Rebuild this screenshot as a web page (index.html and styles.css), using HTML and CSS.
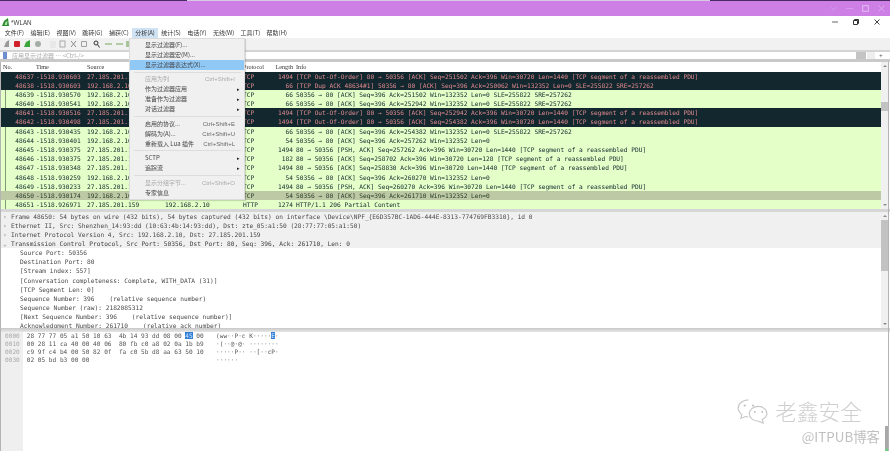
FILE: index.html
```html
<!DOCTYPE html>
<html lang="zh">
<head>
<meta charset="utf-8">
<title>*WLAN</title>
<link rel="stylesheet" href="styles.css">
</head>
<body>
<div class="screen">
  <div class="topstrip"><span class="seg seg1"></span><span class="seg seg2"></span><span class="seg seg3"></span></div>
  <div class="hostbar">
    <svg class="hostctl" viewBox="0 0 10 10"><path d="M1 3l4 4 4-4" fill="none" stroke="#dca8ef"/></svg>
    <svg class="hostctl" viewBox="0 0 10 10"><path d="M0 5h10" stroke="#dca8ef"/></svg>
    <svg class="hostctl" viewBox="0 0 10 10"><rect x="1" y="1" width="8" height="8" fill="none" stroke="#e4bdf3" stroke-width="1.4"/></svg>
    <svg class="hostctl" viewBox="0 0 10 10"><path d="M1 1l8 8M9 1l-8 8" stroke="#e4bdf3"/></svg>
  </div>
  <div class="window">
    <div class="titlebar">
      <svg class="finicon" width="7" height="8" viewBox="0 0 7 8"><path d="M0 8 L2 3 L6 0 L7 8 Z" fill="#2c8a2c"/><path d="M2.5 7 L3.5 4 L5.5 3 L5 7 Z" fill="#a9e0a9"/></svg>
      <span class="title">*WLAN</span>
      <span class="winctl">
        <svg width="6" height="6" viewBox="0 0 6 6"><path d="M0 3H6" stroke="#666"/></svg>
        <svg width="6" height="6" viewBox="0 0 6 6"><path d="M.5 1.5h4v4h-4zM1.5 1.5v-1h4v4h-1" fill="none" stroke="#333"/></svg>
        <svg width="6" height="6" viewBox="0 0 6 6"><path d="M.5 .5l5 5M5.5 .5l-5 5" stroke="#444"/></svg>
      </span>
    </div>
    <div class="menubar">
      <span>文件(F)</span><span>编辑(E)</span><span>视图(V)</span><span>跳转(G)</span><span>捕获(C)</span><span class="open">分析(A)</span><span>统计(S)</span><span>电话(Y)</span><span>无线(W)</span><span>工具(T)</span><span>帮助(H)</span>
    </div>
    <div class="toolbar">
      <svg class="tb" width="135" height="11" viewBox="0 0 135 11">
        <path d="M4 9 L6 4 L9 2 L9 9Z" fill="#9a9a9a"/>
        <rect x="14" y="3" width="6" height="6" rx="1" fill="#d0202a"/>
        <path d="M24 9 L26 4 L30 2 L30 9Z" fill="#3aa53a"/>
        <circle cx="38" cy="6" r="3" fill="#a4aea6"/>
        <rect x="50" y="3" width="6" height="7" fill="#e8e8e8"/>
        <rect x="60" y="3" width="5" height="6" fill="none" stroke="#aaa"/>
        <path d="M71 3l5 6M76 3l-5 6" stroke="#8a8a8a"/>
        <path d="M81.5 3.5h5v5h-5z" fill="none" stroke="#a0a0a0"/>
        <circle cx="96" cy="5" r="2" fill="none" stroke="#333"/><path d="M97.5 6.5l2 3" stroke="#333"/>
        <path d="M105 6h7" stroke="#b4cca6" stroke-width="2"/>
        <path d="M116 6h7" stroke="#b4cca6" stroke-width="2"/>
        <path d="M126 3h3v6h-3z" fill="#a9c49a"/>
      </svg>
    </div>
    <div class="filterbar">
      <span class="fbox"><i class="bm"></i><span class="fhint">应用显示过滤器 … &lt;Ctrl-/&gt;</span></span>
      <span class="fbtn"></span><span class="fdrop"></span><span class="fplus">+</span>
    </div>
    <div class="plist">
      <div class="rows">
        <div class="row head"><span>No.</span><span>Time</span><span>Source</span><span>Destination</span><span>Protocol</span><span class="r">Length</span><span>Info</span></div>
        <div class="row dark"><span class="r">48637</span><span>-1518.930603</span><span>27.185.201.159</span><span>192.168.2.10</span><span>TCP</span><span class="r">1494</span><span>[TCP Out-Of-Order] 80 → 50356 [ACK] Seq=251502 Ack=396 Win=30720 Len=1440 [TCP segment of a reassembled PDU]</span></div>
        <div class="row dark"><span class="r">48638</span><span>-1518.930603</span><span>192.168.2.10</span><span>27.185.201.159</span><span>TCP</span><span class="r">66</span><span>[TCP Dup ACK 48634#1] 50356 → 80 [ACK] Seq=396 Ack=250062 Win=132352 Len=0 SLE=255822 SRE=257262</span></div>
        <div class="row"><span class="r">48639</span><span>-1518.930570</span><span>192.168.2.10</span><span>27.185.201.159</span><span>TCP</span><span class="r">66</span><span>50356 → 80 [ACK] Seq=396 Ack=251502 Win=132352 Len=0 SLE=255822 SRE=257262</span></div>
        <div class="row"><span class="r">48640</span><span>-1518.930541</span><span>192.168.2.10</span><span>27.185.201.159</span><span>TCP</span><span class="r">66</span><span>50356 → 80 [ACK] Seq=396 Ack=252942 Win=132352 Len=0 SLE=255822 SRE=257262</span></div>
        <div class="row dark"><span class="r">48641</span><span>-1518.930516</span><span>27.185.201.159</span><span>192.168.2.10</span><span>TCP</span><span class="r">1494</span><span>[TCP Out-Of-Order] 80 → 50356 [ACK] Seq=252942 Ack=396 Win=30720 Len=1440 [TCP segment of a reassembled PDU]</span></div>
        <div class="row dark"><span class="r">48642</span><span>-1518.930498</span><span>27.185.201.159</span><span>192.168.2.10</span><span>TCP</span><span class="r">1494</span><span>[TCP Out-Of-Order] 80 → 50356 [ACK] Seq=254382 Ack=396 Win=30720 Len=1440 [TCP segment of a reassembled PDU]</span></div>
        <div class="row"><span class="r">48643</span><span>-1518.930435</span><span>192.168.2.10</span><span>27.185.201.159</span><span>TCP</span><span class="r">66</span><span>50356 → 80 [ACK] Seq=396 Ack=254382 Win=132352 Len=0 SLE=255822 SRE=257262</span></div>
        <div class="row"><span class="r">48644</span><span>-1518.930401</span><span>192.168.2.10</span><span>27.185.201.159</span><span>TCP</span><span class="r">54</span><span>50356 → 80 [ACK] Seq=396 Ack=257262 Win=132352 Len=0</span></div>
        <div class="row"><span class="r">48645</span><span>-1518.930375</span><span>27.185.201.159</span><span>192.168.2.10</span><span>TCP</span><span class="r">1494</span><span>80 → 50356 [PSH, ACK] Seq=257262 Ack=396 Win=30720 Len=1440 [TCP segment of a reassembled PDU]</span></div>
        <div class="row"><span class="r">48646</span><span>-1518.930375</span><span>27.185.201.159</span><span>192.168.2.10</span><span>TCP</span><span class="r">182</span><span>80 → 50356 [ACK] Seq=258702 Ack=396 Win=30720 Len=128 [TCP segment of a reassembled PDU]</span></div>
        <div class="row"><span class="r">48647</span><span>-1518.930348</span><span>27.185.201.159</span><span>192.168.2.10</span><span>TCP</span><span class="r">1494</span><span>80 → 50356 [ACK] Seq=258830 Ack=396 Win=30720 Len=1440 [TCP segment of a reassembled PDU]</span></div>
        <div class="row"><span class="r">48648</span><span>-1518.930259</span><span>192.168.2.10</span><span>27.185.201.159</span><span>TCP</span><span class="r">54</span><span>50356 → 80 [ACK] Seq=396 Ack=260270 Win=132352 Len=0</span></div>
        <div class="row"><span class="r">48649</span><span>-1518.930233</span><span>27.185.201.159</span><span>192.168.2.10</span><span>TCP</span><span class="r">1494</span><span>80 → 50356 [PSH, ACK] Seq=260270 Ack=396 Win=30720 Len=1440 [TCP segment of a reassembled PDU]</span></div>
        <div class="row sel"><span class="r">48650</span><span>-1518.930174</span><span>192.168.2.10</span><span>27.185.201.159</span><span>TCP</span><span class="r">54</span><span>50356 → 80 [ACK] Seq=396 Ack=261710 Win=132352 Len=0</span></div>
        <div class="row"><span class="r">48651</span><span>-1518.926971</span><span>27.185.201.159</span><span>192.168.2.10</span><span>HTTP</span><span class="r">1274</span><span>HTTP/1.1 206 Partial Content</span></div>
      </div>
      <div class="vscroll"><i class="up"></i><i class="thumb thumb-list"></i><i class="down"></i></div>
    </div>
    <div class="splitter"></div>
    <div class="details">
      <div class="dlines">
        <div class="d"><i class="tw">›</i>Frame 48650: 54 bytes on wire (432 bits), 54 bytes captured (432 bits) on interface \Device\NPF_{E6D357BC-1AD6-444E-8313-774769FB3310}, id 0</div>
        <div class="d"><i class="tw">›</i>Ethernet II, Src: Shenzhen_14:93:dd (10:63:4b:14:93:dd), Dst: zte_05:a1:50 (28:77:77:05:a1:50)</div>
        <div class="d"><i class="tw">›</i>Internet Protocol Version 4, Src: 192.168.2.10, Dst: 27.185.201.159</div>
        <div class="d"><i class="tw">⌄</i>Transmission Control Protocol, Src Port: 50356, Dst Port: 80, Seq: 396, Ack: 261710, Len: 0</div>
        <div class="d in">Source Port: 50356</div>
        <div class="d in">Destination Port: 80</div>
        <div class="d in">[Stream index: 557]</div>
        <div class="d in">[Conversation completeness: Complete, WITH_DATA (31)]</div>
        <div class="d in">[TCP Segment Len: 0]</div>
        <div class="d in">Sequence Number: 396    (relative sequence number)</div>
        <div class="d in">Sequence Number (raw): 2182085312</div>
        <div class="d in">[Next Sequence Number: 396    (relative sequence number)]</div>
        <div class="d in">Acknowledgment Number: 261710    (relative ack number)</div>
      </div>
      <div class="vscroll"><i class="up"></i><i class="thumb thumb-detail"></i><i class="down"></i></div>
    </div>
    <div class="splitter lower"></div>
    <div class="hex">
      <div class="offs">0000<br>0010<br>0020<br>0030</div>
      <div class="bytes">28 77 77 05 a1 50 10 63  4b 14 93 dd 08 00 <b>45</b> 00<br>00 28 11 ca 40 00 40 06  80 fb c0 a8 02 0a 1b b9<br>c9 9f c4 b4 00 50 82 0f  fa c0 5b d8 aa 63 50 10<br>02 05 bd b3 00 00</div>
      <div class="ascii">(ww··P·c K·····<b>E</b>·<br>·(··@·@· ········<br>·····P·· ··[··cP·<br>······</div>
    </div>
    <i class="edge edge-left"></i><i class="edge edge-right"></i><i class="cornerbar"></i>
    <div class="watermark">
      <div class="wm-main">
        <svg width="36" height="26" viewBox="0 0 36 28"><path d="M13 2C7 2 2 6 2 11c0 3 2 5 4 7l-1 4 5-2c1 0 2 .5 3 .5" fill="none" stroke="#c6c6c6" stroke-width="1.2"/><path d="M24 9c-6 0-10 4-10 8s4 8 10 8l5 2-1-4c3-1 5-4 5-6 0-4-4-8-9-8z" fill="none" stroke="#c6c6c6" stroke-width="1.2"/><circle cx="9" cy="8" r="1.1" fill="#bbb"/><circle cx="18" cy="8" r="1.1" fill="#bbb"/><circle cx="20" cy="15" r="1" fill="#bbb"/><circle cx="28" cy="15" r="1" fill="#bbb"/></svg>
        <span class="wm-name">老鑫安全</span>
      </div>
      <div class="wm-sub">@ITPUB博客</div>
    </div>
    <div class="menu">
      <div class="mi">显示过滤器(F)...</div>
      <div class="mi">显示过滤器宏(M)...</div>
      <div class="mi hi">显示过滤器表达式(X)...</div>
      <div class="sep"></div>
      <div class="mi dis"><span>应用为列</span><span>Ctrl+Shift+I</span></div>
      <div class="mi"><span>作为过滤器应用</span><em>▸</em></div>
      <div class="mi"><span>准备作为过滤器</span><em>▸</em></div>
      <div class="mi"><span>对话过滤器</span><em>▸</em></div>
      <div class="sep"></div>
      <div class="mi"><span>启用的协议...</span><span>Ctrl+Shift+E</span></div>
      <div class="mi"><span>解码为(A)...</span><span>Ctrl+Shift+U</span></div>
      <div class="mi"><span>重新载入 Lua 插件</span><span>Ctrl+Shift+L</span></div>
      <div class="sep"></div>
      <div class="mi"><span>SCTP</span><em>▸</em></div>
      <div class="mi"><span>追踪流</span><em>▸</em></div>
      <div class="sep"></div>
      <div class="mi dis"><span>显示分组字节...</span><span>Ctrl+Shift+O</span></div>
      <div class="mi">专家信息</div>
    </div>
  </div>
</div>
</body>
</html>
```
FILE: styles.css
```css
* { box-sizing: border-box; }
html, body { margin: 0; padding: 0; background: #fff; }
body { width: 890px; height: 451px; overflow: hidden; }
.screen {
  width: 890px; height: 451px; display: flex; flex-direction: column;
  filter: blur(0.5px); font-family: "Noto Sans CJK SC", "Liberation Sans", sans-serif;
}
.topstrip { height: 1px; display: flex; flex: none; }
.seg { display: block; }
.seg1 { width: 187px; background: #4a2a63; }
.seg2 { width: 523px; background: #d8c8e4; }
.seg3 { flex: 1; background: #4a2a63; }
.hostbar {
  height: 15px; flex: none; background: #cd7fe6; display: flex; justify-content: flex-end;
  align-items: center; gap: 9px; padding-right: 5px;
}
.hostctl { width: 7px; height: 7px; display: block; }
.window { flex: 1; position: relative; display: flex; flex-direction: column; background: #fff; min-height: 0; }
.titlebar { height: 12px; flex: none; display: flex; align-items: center; padding-left: 2px; font-size: 6.3px; color: #444; font-family: "Liberation Sans", sans-serif; }
.finicon { margin-right: 2px; }
.winctl { margin-left: auto; display: flex; gap: 15px; padding-right: 10px; }
.menubar { height: 10px; flex: none; display: flex; font-size: 6px; line-height: 10px; color: #333; padding-left: 1.5px; }
.menubar span { padding: 0 3.2px; }
.menubar .open { background: #cfe3f5; }
.toolbar { height: 12px; flex: none; background: #f1f1f1; }
.tb { display: block; }
.filterbar {
  height: 12px; flex: none; background: #fff; border-top: 2px solid #d4d4d4; border-bottom: 3px solid #c9c9c9;
  display: flex; align-items: stretch; padding: 0 3px 0 3px;
}
.fbox { flex: 1; display: flex; align-items: center; font-size: 6px; color: #aaa; }
.bm { width: 4px; height: 7px; background: #6f8ed0; margin-right: 5px; }
.fbtn { width: 10px; background: #c4c4c4; margin-left: 1px; }
.fdrop { width: 8px; background: #eee; margin-left: 1px; }
.fplus { width: 12px; text-align: center; font-size: 6px; line-height: 7px; color: #555; }
.plist { height: 147px; flex: none; display: flex; padding-right: 2px; }
.rows { flex: 1; min-width: 0; overflow: hidden; padding-left: 1px; }
.row {
  display: grid; grid-template-columns: 34px 52px 78px 78px 30px 20px 1fr; column-gap: 0;
  height: 9.2px; white-space: pre; overflow: hidden;
  font: 6.2px/9.2px "DejaVu Sans Mono", monospace; color: #12272e;
  background: linear-gradient(#7f9c74, #7f9c74) 4px 0 / 1px 100% no-repeat, #e4ffc7;
}
.row .r { text-align: right; }
.row > span:nth-child(1) { padding-right: 1px; }
.row > span:nth-child(2) { padding-left: 1px; }
.row > span:nth-child(7) { padding-left: 3px; }
.head {
  height: 9.5px; background: #fff; color: #333; font: 6.2px/9.5px "Liberation Serif", serif;
}
.head > span:first-child { padding-left: 2px; }
.dark { background: #12272e; color: #e08a8f; }
.sel { background: #bcc9a4; color: #2a3a2a; }
.vscroll { width: 7px; flex: none; background: #f0f0f0; position: relative; display: flex; flex-direction: column; align-items: center; overflow: hidden; }
.up, .down { display: block; width: 0; height: 0; border-left: 2px solid transparent; border-right: 2px solid transparent; flex: none; }
.up { border-bottom: 2px solid #8a8a8a; margin-top: 3px; }
.down { border-top: 2px solid #8a8a8a; margin-top: auto; margin-bottom: 3px; }
.thumb { display: block; background: #c2c2c2; width: 100%; flex: none; }
.thumb-list { height: 9px; margin-top: 35px; }
.thumb-detail { height: 51px; margin-top: 3px; }
.splitter { height: 2.5px; flex: none; background: #d6d6d6; }
.lower { height: 4px; background: linear-gradient(#c8c8c8, #e6e6e6); }
.details { height: 116px; flex: none; display: flex; overflow: hidden; padding-right: 2px; }
.dlines { flex: 1; min-width: 0; overflow: hidden; }
.d {
  height: 9.17px; font: 6.2px/9.17px "DejaVu Sans Mono", monospace; color: #4a4a4a; white-space: pre; padding-left: 11px; position: relative;
}
.d:nth-child(-n+4) { background: #f0f0f0; }
.d:nth-child(4) { color: #3d3d3d; }
.d.in { padding-left: 20px; }
.tw { position: absolute; left: 3px; top: 0; font-style: normal; color: #888; }
.hex {
  flex: 1; display: flex; font: 6.13px/8.3px "DejaVu Sans Mono", monospace; color: #555; white-space: pre;
  min-height: 0;
}
.offs { width: 23px; flex: none; background: #efefef; padding-left: 5px; color: #aaa; }
.bytes { width: 190px; flex: none; padding-left: 3.7px; }
.ascii { flex: 1; padding-left: 3px; }
.bytes b, .ascii b { background: #2f7fd6; color: #cfe3fa; font-weight: normal; }
.edge { position: absolute; width: 1px; top: 46px; bottom: 0; background: #b4b4b4; display: block; }
.edge-left { left: 0; }
.edge-right { right: 1px; }
.cornerbar { position: absolute; right: 2px; width: 3px; top: 410px; bottom: 0; background: linear-gradient(#a8a8a8 85%, #5fd67a); display: block; }
.watermark { position: absolute; right: 10px; bottom: 7px; display: flex; flex-direction: column; align-items: flex-end; pointer-events: none; }
.wm-main { display: flex; align-items: center; gap: 4px; margin-right: 18px; }
.wm-name { font-size: 21.7px; line-height: 24px; color: #cfcfcf; font-weight: 300; }
.wm-sub { font-size: 13.4px; line-height: 15px; margin-top: 5px; color: #c0c0c0; }
.menu {
  position: absolute; left: 129px; top: 22px; width: 116px; height: 162px; padding: 1px 0 0;
  background: #f0f0f0; border: 1px solid #dcdcdc; font-size: 6px; color: #444; box-shadow: 1px 1px 1px rgba(0,0,0,.15);
}
.mi { height: 10px; line-height: 10px; padding: 0 4px 0 15px; display: flex; justify-content: space-between; align-items: center; white-space: nowrap; }
.mi em { font-style: normal; font-size: 5px; color: #222; }
.mi > span + span { color: #666; font-family: "Liberation Sans", sans-serif; padding-right: 5px; }
.hi { background: #90c8f6; }
.dis, .dis > span + span { color: #aaa; }
.sep { height: 1px; background: #ddd; margin: 1.7px 3px 1.7px 4px; }
```
